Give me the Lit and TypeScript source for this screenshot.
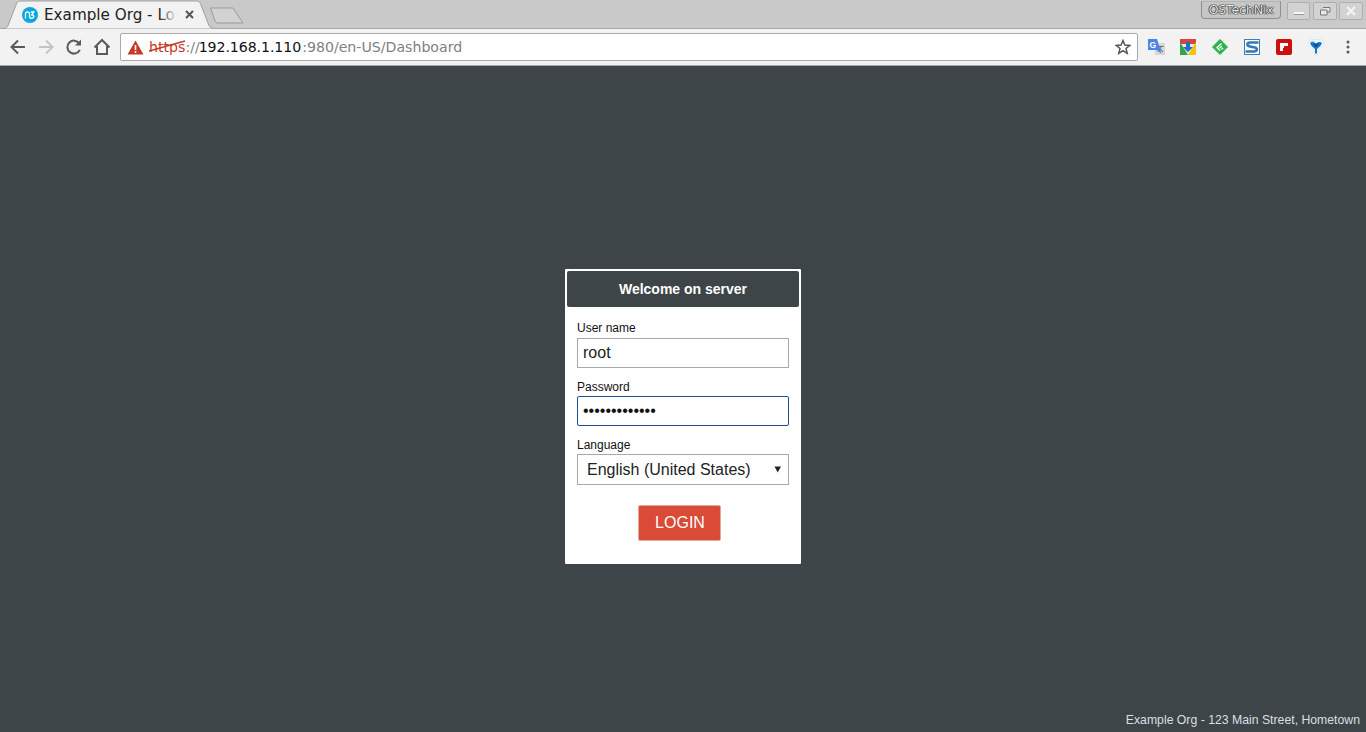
import { LitElement, html, css, svg } from "lit";
import { customElement } from "lit/decorators.js";

@customElement("app-root")
export class AppRoot extends LitElement {
  static styles = css`
    :host { display: flex; flex-direction: column; height: 732px; width: 1366px; overflow: hidden; font-family: "Liberation Sans", Arial, sans-serif; background: #3e4548; }
    .strip { height: 28px; background: #c9c9c9; display: flex; align-items: flex-start; position: relative; flex: none; box-sizing: border-box; }
    .tab { position: relative; width: 211px; height: 29px; flex: none; margin-left: 2px; z-index: 1; }
    .tab-bg { position: absolute; inset: 0; }
    .fav { position: absolute; left: 20px; top: 7px; }
    .title { position: absolute; left: 42px; top: 5px; width: 133px; overflow: hidden; white-space: nowrap; font: 15.2px/20px "DejaVu Sans", sans-serif; color: #222; }
    .fade { position: absolute; left: 157px; top: 5px; width: 18px; height: 20px; background: linear-gradient(to right, rgba(242,242,242,0), #f2f2f2); }
    .close { position: absolute; left: 182px; top: 9px; }
    .newtab { margin: 7px 0 0 -4px; flex: none; }
    .winctl { margin-left: auto; display: flex; align-items: flex-start; padding: 1px 3px 0 0; gap: 3px; }
    .badge { font: 12.7px/16px "DejaVu Sans", sans-serif; color: #e6e6e6; height: 18px; width: 80px; margin-right: 3px; box-sizing: border-box; border: 1px solid #8f8f8f; border-top-color: #b5b5b5; border-radius: 0 0 4px 4px; background: #c6c6c6; text-align: center; letter-spacing: -0.2px; text-shadow: 0 0 1px #000, 0 0 1px #000, 0 0 1px #000; }
    .wbtn { width: 24px; height: 18px; box-sizing: border-box; border: 1px solid #aeaeae; border-radius: 2px; background: #d2d2d2; display: flex; align-items: center; justify-content: center; margin-top: 1px; }
    .wbtn.min { width: 23px; }
    .wbtn.cls { margin-left: -1px; }
    .toolbar { height: 38px; background: #f2f2f2; border-top: 1px solid #a9a9a9; border-bottom: 1px solid #a9a9a9; box-sizing: border-box; flex: none; display: flex; align-items: center; position: relative; }
    .nav { display: flex; width: 120px; flex: none; padding-left: 8px; box-sizing: border-box; gap: 8px; align-items: center; }
    .omni { flex: none; width: 1018px; height: 28px; box-sizing: border-box; background: #fff; border: 1px solid #a9a9a9; border-radius: 2px; display: flex; align-items: center; padding-left: 6px; font: 14.15px/20px "DejaVu Sans", sans-serif; color: #7f7f7f; white-space: nowrap; }
    .warn { flex: none; margin-right: 5px; }
    .https { color: #c53929; position: relative; }
    .https svg { position: absolute; left: 0; top: 1px; }
    .host { color: #111; margin-left: -1px; letter-spacing: -0.08px; }
    .rest { margin-left: 1px; }
    .star { margin-left: auto; margin-right: 6px; flex: none; }
    .exts { display: flex; flex: none; padding-left: 2px; }
    .ext { width: 32px; height: 36px; display: flex; align-items: center; justify-content: center; flex: none; }
    .page { flex: 1; display: flex; flex-direction: column; position: relative; align-items: center; }
    .card { margin-top: 203px; width: 236px; height: 295px; box-sizing: border-box; background: #fff; padding: 2px; border-radius: 1px; }
    .head { height: 36px; background: #3e4548; color: #fff; font-weight: 700; font-size: 14px; line-height: 36px; text-align: center; border-radius: 2px; }
    .form { padding: 14px 10px 0; }
    label { display: block; font-size: 12px; line-height: 14px; color: #111; }
    .field { height: 30px; box-sizing: border-box; width: 212px; border: 1px solid #a9a9a9; margin: 3px 0 0; padding: 0 5px; font-size: 16px; line-height: 28px; color: #222; display: flex; align-items: center; }
    .row { margin-bottom: 12px; }
    .focus { border: 1.5px solid #1f4f9c; border-radius: 2px; margin-top: 2px; color: #111; }
    .sel { height: 31px; margin-top: 2px; padding: 0 6px 0 9px; justify-content: space-between; }
    .caret { flex: none; }
    .btnrow { display: flex; justify-content: center; margin: 20px 8px 0 0; }
    button { width: 83px; height: 36px; background: #d94a37; color: #fff; border: 1px solid #dfa9a0; border-radius: 2px; font: 16px "Liberation Sans", sans-serif; padding: 0 0 0 2px; }
    .foot { position: absolute; right: 6px; bottom: 5px; font-size: 12.25px; line-height: 14px; color: #d8dfe5; white-space: nowrap; }
  `;

  private ic(body: unknown, w = 20, h = 20) {
    return html`<svg width=${w} height=${h} viewBox="0 0 ${w} ${h}" fill="none">${body}</svg>`;
  }

  render() {
    return html`
      <div class="strip">
        <div class="tab">
          <svg class="tab-bg" width="211" height="29" viewBox="0 0 211 29">
            <path d="M0 29 C5 29 6 26 7 23 L14 5 C15 2 16 1 20 1 H193 C197 1 198 2 199 5 L206 23 C207 26 208 28 211 28.500 V29 Z" fill="#f2f2f2" stroke="#a0a0a0"/>
          </svg>
          <svg class="fav" width="16" height="16" viewBox="0 0 16 16">
            <circle cx="8" cy="8" r="8" fill="#0aa8e0"/>
            <path d="M3.500 11.500 V7 Q3.500 4.800 5.500 4.800 Q7.500 4.800 7.500 7 V9.500 Q7.500 11.300 9 11.300 Q11.800 11.300 11.800 9.300 Q11.800 7.800 9.800 7.800 L11.800 5 H8.800" stroke="#fff" stroke-width="1.300" fill="none"/>
          </svg>
          <div class="title">Example Org - Login</div>
          <div class="fade"></div>
          <svg class="close" width="11" height="11" viewBox="0 0 11 11"><path d="M2 2 L9 9 M9 2 L2 9" stroke="#555" stroke-width="2"/></svg>
        </div>
        <svg class="newtab" width="35" height="17" viewBox="0 0 35 17"><path d="M1.500 1 H24 L34 16 H9 Q7 16 6 14 Z" fill="#d2d2d2" stroke="#9a9a9a"/></svg>
        <div class="winctl">
          <div class="badge">OSTechNix</div>
          <div class="wbtn min"><svg width="12" height="8" viewBox="0 0 12 8"><path d="M1 6 H11" stroke="#f6f6f6" stroke-width="2"/><path d="M1 7.500 H11" stroke="#999"/></svg></div>
          <div class="wbtn"><svg width="12" height="10" viewBox="0 0 12 10"><path d="M4 1.500 H11 V6 H8 M1.500 4 H8 V9 H1.500 Z" stroke="#777" fill="#e8e8e8"/></svg></div>
          <div class="wbtn cls"><svg width="12" height="10" viewBox="0 0 12 10"><path d="M2 1 L10 9 M10 1 L2 9" stroke="#f4f4f4" stroke-width="2.200"/></svg></div>
        </div>
      </div>
      <div class="toolbar">
        <div class="nav">
          ${this.ic(svg`<path d="M17 10 H4 M10 3.500 L3.500 10 L10 16.500" stroke="#5a5a5a" stroke-width="2"/>`)}
          ${this.ic(svg`<path d="M3 10 H16 M10 3.500 L16.500 10 L10 16.500" stroke="#c4c4c4" stroke-width="2"/>`)}
          ${this.ic(svg`<path d="M15.800 12.800 A6.500 6.500 0 1 1 15.300 6.500" stroke="#5a5a5a" stroke-width="2"/><path d="M17 2.500 V8.500 H11 Z" fill="#5a5a5a"/>`)}
          ${this.ic(svg`<path d="M2.500 10.500 L10 3 L17.500 10.500 M5 9 V17 H15 V9" stroke="#5a5a5a" stroke-width="2"/>`)}
        </div>
        <div class="omni">
          <svg class="warn" width="17" height="15" viewBox="0 0 17 15"><path d="M8.500 0.500 L16.500 14.500 H0.500 Z" fill="#c53929"/><path d="M8.500 5 V10 M8.500 11 V13" stroke="#fff" stroke-width="1.600"/></svg>
          <span class="https">https<svg width="38" height="18" viewBox="0 0 38 18"><path d="M0 13 L36 3" stroke="#c53929" stroke-width="1.500"/></svg></span><span>://</span><span class="host">192.168.1.110</span><span class="rest">:980/en-US/Dashboard</span>
          <svg class="star" width="16" height="16" viewBox="0 0 16 16"><path d="M8 1.500 L9.900 6 L14.800 6.400 L11 9.500 L12.200 14.300 L8 11.700 L3.800 14.300 L5 9.500 L1.200 6.400 L6.100 6 Z" stroke="#555" stroke-width="1.500" fill="none"/></svg>
        </div>
        <div class="exts">
          <div class="ext"><svg width="18" height="18" viewBox="0 0 18 18"><rect x="8" y="5" width="10" height="12" fill="#d6d6d6"/><path d="M11 8.500 H16.500 M13.500 8.500 L12 14 M12.500 10 L16 14" stroke="#666"/><path d="M1 1 H10 L14.500 15.500 L9.500 12 H1 Z" fill="#4a86e8"/><text x="2.500" y="10" font-size="8.500" font-weight="700" font-family="Liberation Sans" fill="#fff">G</text></svg></div>
          <div class="ext"><svg width="16" height="16" viewBox="0 0 16 16"><path d="M0 0 H16 V5 H0 Z" fill="#d9453a"/><path d="M0 5 H16 L8 16 Z" fill="#e8e8e8"/><path d="M0 3 L8 16 H0 Z" fill="#2ea44f"/><path d="M16 3 V16 H8 Z" fill="#f4c20d"/><path d="M6 3 H10 V8 H13 L8 13 L3 8 H6 Z" fill="#1f6fc0"/></svg></div>
          <div class="ext"><svg width="16" height="16" viewBox="0 0 16 16"><path d="M8 0.500 L15.500 8 L8 15.500 L0.500 8 Z" fill="#2bb24c" stroke="#2bb24c" stroke-linejoin="round"/><path d="M9.500 4.500 L5 8.500 L8 11.500 M10 7 L7.500 9.200 M11 9 L9.500 10.500" stroke="#fff" stroke-width="1.300" fill="none"/></svg></div>
          <div class="ext"><svg width="16" height="16" viewBox="0 0 16 16"><rect x="0.500" y="0.500" width="15" height="15" fill="#fff" stroke="#3f7fb5"/><path d="M14.500 3.500 H6 C2.500 3.500 2.500 7 6 7.500 L11 8.500 C13.500 9 13.500 12 10.500 12.500 H1.500" stroke="#2f79b8" stroke-width="2.600" fill="none"/></svg></div>
          <div class="ext"><svg width="16" height="16" viewBox="0 0 16 16"><rect width="16" height="16" rx="2" fill="#cf0e0e"/><path d="M4 4 H12 V7 H8 V9 H7 V12 H4 Z" fill="#fff"/></svg></div>
          <div class="ext"><svg width="18" height="18" viewBox="0 0 18 18"><path d="M1 5 Q1 1.500 5 1.500 H13 Q17 1.500 17 5 Q16 9 11 12 L10.500 17 H7.500 L7 12 Q2 9 1 5 Z" fill="#f4f8fb" stroke="#d6dde2" stroke-width="0.600"/><path d="M3 5 Q5 3 9 5.500 Q13 3 15 5 Q14 8.500 10 11 V15.500 H8 V11 Q4 8.500 3 5 Z" fill="#1577c4"/><path d="M6 5 Q9 7 12 5 Q11 8 9 9 Q7 8 6 5 Z" fill="#0c4f96"/><path d="M4 4 Q6 3 8 4.500" stroke="#6cc0ef" stroke-width="1" fill="none"/></svg></div>
          <div class="ext"><svg width="4" height="14" viewBox="0 0 4 14"><circle cx="2" cy="2" r="1.500" fill="#5a5a5a"/><circle cx="2" cy="7" r="1.500" fill="#5a5a5a"/><circle cx="2" cy="12" r="1.500" fill="#5a5a5a"/></svg></div>
        </div>
      </div>
      <div class="page">
        <div class="card">
          <div class="head">Welcome on server</div>
          <div class="form">
            <div class="row"><label>User name</label><div class="field">root</div></div>
            <div class="row"><label>Password</label><div class="field focus">•••••••••••••</div></div>
            <div><label>Language</label><div class="field sel"><span>English (United States)</span><svg class="caret" width="8" height="7" viewBox="0 0 8 7"><path d="M0.500 0.500 H7 L3.700 6.500 Z" fill="#222"/></svg></div></div>
            <div class="btnrow"><button>LOGIN</button></div>
          </div>
        </div>
        <div class="foot">Example Org - 123 Main Street, Hometown</div>
      </div>
    `;
  }
}
